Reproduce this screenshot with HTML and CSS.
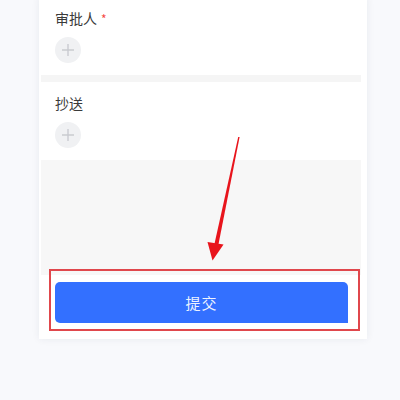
FILE: index.html
```html
<!DOCTYPE html>
<html lang="zh-CN">
<head>
<meta charset="utf-8">
<title>审批</title>
<link rel="stylesheet" href="styles.css">
</head>
<body>
<div class="page">
  <div class="card">
    <section class="field">
      <div class="label">审批人<span class="req">*</span></div>
      <button class="add" type="button" aria-label="添加审批人">
        <svg viewBox="0 0 26 26" width="26" height="26"><path d="M13 7v12M7 13h12" stroke="#c9cbd0" stroke-width="1.4" fill="none"/></svg>
      </button>
    </section>
    <div class="band"></div>
    <section class="field">
      <div class="label">抄送</div>
      <button class="add" type="button" aria-label="添加抄送人">
        <svg viewBox="0 0 26 26" width="26" height="26"><path d="M13 7v12M7 13h12" stroke="#c9cbd0" stroke-width="1.4" fill="none"/></svg>
      </button>
    </section>
    <div class="filler"></div>
    <footer class="footer">
      <button class="submit" type="button">提交</button>
    </footer>
  </div>

  <div class="highlight"></div>
  <svg class="pointer" width="400" height="400" viewBox="0 0 400 400">
    <path d="M239.6 140 L238.2 140 L214 249 L218 249.8 Z" fill="#e8141c"/>
    <path d="M207.5 245 L223.5 247.5 L212.5 263.5 Z" fill="#e8141c"/>
  </svg>
</div>
</body>
</html>
```
FILE: styles.css
```css
* { box-sizing: border-box; }

html, body {
  margin: 0;
  height: 100%;
  background: #f8f9fc;
  font-family: "Noto Sans CJK SC", "Noto Sans", sans-serif;
  overflow: hidden;
}

.page {
  position: relative;
  width: 400px;
  height: 400px;
}

.card {
  margin: -3px 0 0 39px;
  width: 328px;
  padding: 0 6px 0 2px;
  background: #fff;
  box-shadow: 0 0 8px rgba(30, 40, 70, 0.07);
  display: flex;
  flex-direction: column;
}

.field {
  background: #fff;
  padding: 10px 14px 12px;
  display: flex;
  flex-direction: column;
  gap: 8px;
}

.label {
  font-size: 14px;
  line-height: 22px;
  color: #3a3a3a;
  display: flex;
  align-items: center;
}

.req {
  color: #f54a45;
  font-size: 12px;
  line-height: 12px;
  margin: 2px 0 0 4px;
}

.add {
  width: 26px;
  height: 26px;
  padding: 0;
  border: 0;
  border-radius: 50%;
  background: #f0f1f3;
  display: flex;
}

.band {
  height: 7px;
  background: #f5f5f5;
}

.filler {
  height: 115px;
  background: #f7f7f7;
}

.footer {
  background: #fff;
  padding: 7px 13px 16px 14px;
}

.submit {
  display: block;
  width: 100%;
  height: 41px;
  border: 0;
  border-radius: 5px 5px 0 5px;
  background: #3370ff;
  color: #eef3ff;
  font-family: inherit;
  font-size: 15px;
  letter-spacing: 1px;
}

.highlight {
  position: absolute;
  left: 49px;
  top: 272px;
  width: 311px;
  height: 62px;
  border: 2px solid #e0474c;
}

.pointer {
  position: absolute;
  left: 0;
  top: 0;
  pointer-events: none;
}
```
